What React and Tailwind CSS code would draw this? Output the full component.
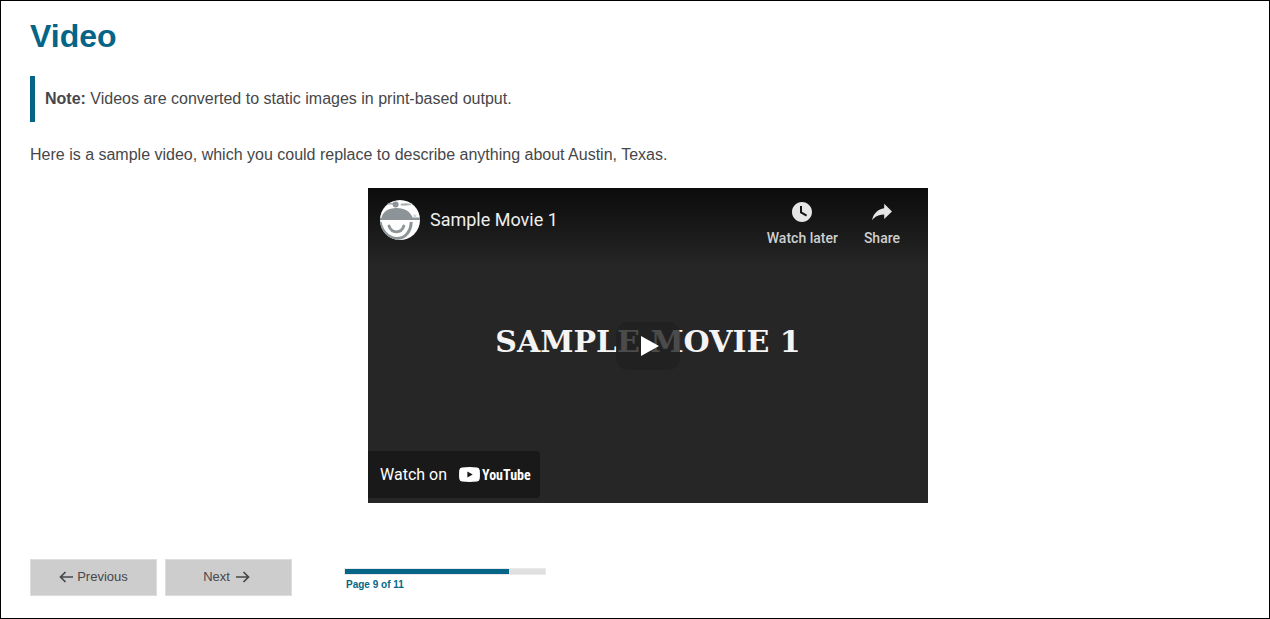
import React from "react";

function ChannelAvatar() {
  return (
    <svg viewBox="0 0 40 40" className="size-10 shrink-0" aria-hidden="true">
      <defs>
        <clipPath id="avatar-clip">
          <circle cx="20" cy="20" r="20" />
        </clipPath>
      </defs>
      <g clipPath="url(#avatar-clip)">
        <rect width="40" height="40" fill="#fdfdfd" />
        <path d="M8 4L13 3.6" stroke="#a9afb2" strokeWidth="1.6" strokeLinecap="round" />
        <path d="M21 4.2Q26 3.4 31 4.4Q26 5.4 21 5Z" fill="#a9afb2" stroke="#a9afb2" />
        <circle cx="15.6" cy="4.6" r="3" fill="#8c9498" />
        <path d="M1.500 18C2.500 12 8 8 16.500 8C25 8 30 11.500 32.600 17.400L40 17.600V20H0V18Z" fill="#8c9498" />
        <circle cx="34.8" cy="15.8" r="1.6" fill="#d5d9db" />
        <path d="M0 22C2 31 8 38.500 17 38.500C25.500 38.500 31 31 31.200 22" fill="none" stroke="#8c9498" strokeWidth="3" />
        <path d="M9 26C10.500 30.200 13 31.800 16.400 31.800C19.800 31.800 22.400 30.200 23.800 26" fill="none" stroke="#8c9498" strokeWidth="2.8" strokeLinecap="round" />
      </g>
    </svg>
  );
}

function PlayerAction({ label, path }) {
  return (
    <button type="button" className="flex flex-col items-center font-[Roboto,sans-serif] text-sm leading-4 font-medium text-[#cfcfcf]">
      <svg viewBox="0 0 36 36" className="size-9" fill="#e6e6e6" aria-hidden="true">
        <path d={path} />
      </svg>
      {label}
    </button>
  );
}

function VideoPlayer() {
  return (
    <section
      aria-label="Sample Movie 1"
      className="relative mx-auto flex aspect-video w-full max-w-[560px] flex-col justify-between bg-[#262626] bg-linear-to-b from-[#0c0c0c] to-[#262626] to-25% font-[Roboto,sans-serif] text-white"
    >
      <p className="absolute inset-x-0 top-[134px] text-center font-['DejaVu_Serif',serif] text-[30px] leading-10 font-bold whitespace-nowrap text-[#f4f4f4]">
        SAMPLE MOVIE 1
      </p>
      <button
        type="button"
        aria-label="Play"
        className="absolute top-[134px] left-1/2 flex h-12 w-16 -translate-x-1/2 items-center justify-center rounded-xl bg-[#212121]/80"
      >
        <svg viewBox="0 0 68 48" className="h-12 w-[68px] shrink-0" fill="#fff" aria-hidden="true">
          <path d="M45 24L27 14V34Z" />
        </svg>
      </button>

      <header className="relative flex items-start justify-between pr-7 pl-3">
        <a href="#channel" className="flex items-center gap-2.5 pt-3 text-lg leading-6 text-[#eeeeee]">
          <ChannelAvatar />
          Sample Movie 1
        </a>
        <div className="flex gap-[26px] pt-1.5">
          <PlayerAction
            label="Watch later"
            path="M18,8 C12.47,8 8,12.47 8,18 C8,23.52 12.47,28 18,28 C23.52,28 28,23.52 28,18 C28,12.47 23.52,8 18,8 Z M16,19.02 L16,12 L18,12 L18,17.86 L23.10,20.81 L22.10,22.54 L16,19.02 Z"
          />
          <PlayerAction
            label="Share"
            path="m 20.20,14.19 0,-4.45 7.79,7.79 -7.79,7.56 0,-4.56 C 16.27,20.69 12.10,21.81 9.34,24.76 8.80,25.13 7.60,27.29 8.12,25.65 9.08,21.32 11.80,17.18 15.98,15.38 c 1.33,-0.60 2.76,-0.98 4.21,-1.19 z"
          />
        </div>
      </header>

      <a
        href="#youtube"
        className="relative mb-[5px] flex h-[47px] w-[172px] items-center gap-3 rounded-r-sm bg-[#191919] pl-3 text-base"
      >
        Watch on
        <span className="flex items-center gap-0.5">
          <svg viewBox="0 0 21 15" className="h-[15px] w-[21px]" aria-hidden="true">
            <path d="M3 .5Q10.500-.4 18 .5Q20.400.8 20.700 3.200Q21.200 7.500 20.700 11.800Q20.400 14.200 18 14.500Q10.500 15.400 3 14.500Q.6 14.200.3 11.800Q-.2 7.500.3 3.200Q.6.8 3 .5Z" fill="#fff" />
            <path d="M8.400 4.600L13.700 7.500L8.400 10.400Z" fill="#191919" />
          </svg>
          <span className="font-['Roboto_Condensed','Liberation_Sans_Narrow',sans-serif] text-sm leading-5 font-bold">YouTube</span>
        </span>
      </a>
    </section>
  );
}

function Arrow({ path }) {
  return (
    <svg viewBox="0 0 14 12" className="h-3 w-3.5" fill="none" stroke="currentColor" strokeWidth="1.7" aria-hidden="true">
      <path d={path} />
    </svg>
  );
}

function PageButton({ children }) {
  return (
    <button
      type="button"
      className="flex h-[37px] w-[127px] items-center justify-center border border-[#dddddd] bg-[#cdcdcd] pb-0.5 text-[13px] text-[#46474a]"
    >
      {children}
    </button>
  );
}

export default function App() {
  return (
    <div className="min-h-screen border border-black bg-white pt-[15px] pr-[3px] pb-5 pl-[29px] font-['Liberation_Sans',Arial,sans-serif] text-base text-[#46474a]">
      <main>
        <h1 className="text-[32px] leading-10 font-bold text-[#046586]">Video</h1>
        <p className="mt-5 border-l-5 border-[#046586] py-[11px] pl-2.5 leading-6">
          <strong>Note:</strong> Videos are converted to static images in print-based output.
        </p>
        <p className="mt-[21px] mb-[21px] leading-6">
          Here is a sample video, which you could replace to describe anything about Austin, Texas.
        </p>
        <VideoPlayer />
      </main>
      <nav aria-label="Pages" className="mt-14 flex items-start gap-2">
        <PageButton>
          <span className="flex items-center gap-1">
            <Arrow path="M14 6H1.500M6.500 1L1.500 6L6.500 11" />
            Previous
          </span>
        </PageButton>
        <PageButton>
          <span className="flex items-center gap-1.5 pr-1">
            Next
            <Arrow path="M0 6H12.500M7.500 1L12.500 6L7.500 11" />
          </span>
        </PageButton>
        <div className="ml-11 w-[202px] pt-[9px]">
          <div
            role="progressbar"
            aria-label="Page progress"
            aria-valuenow={9}
            aria-valuemin={0}
            aria-valuemax={11}
            className="h-[7px] border border-[#e9e9e9] bg-[#e0e0e0]"
          >
            <div className="h-[5px] bg-[#046586]" style={{ width: `${(9 / 11) * 100}%` }} />
          </div>
          <p className="mt-1 pl-0.5 text-[10px] leading-3 font-bold text-[#046586]">Page 9 of 11</p>
        </div>
      </nav>
    </div>
  );
}
